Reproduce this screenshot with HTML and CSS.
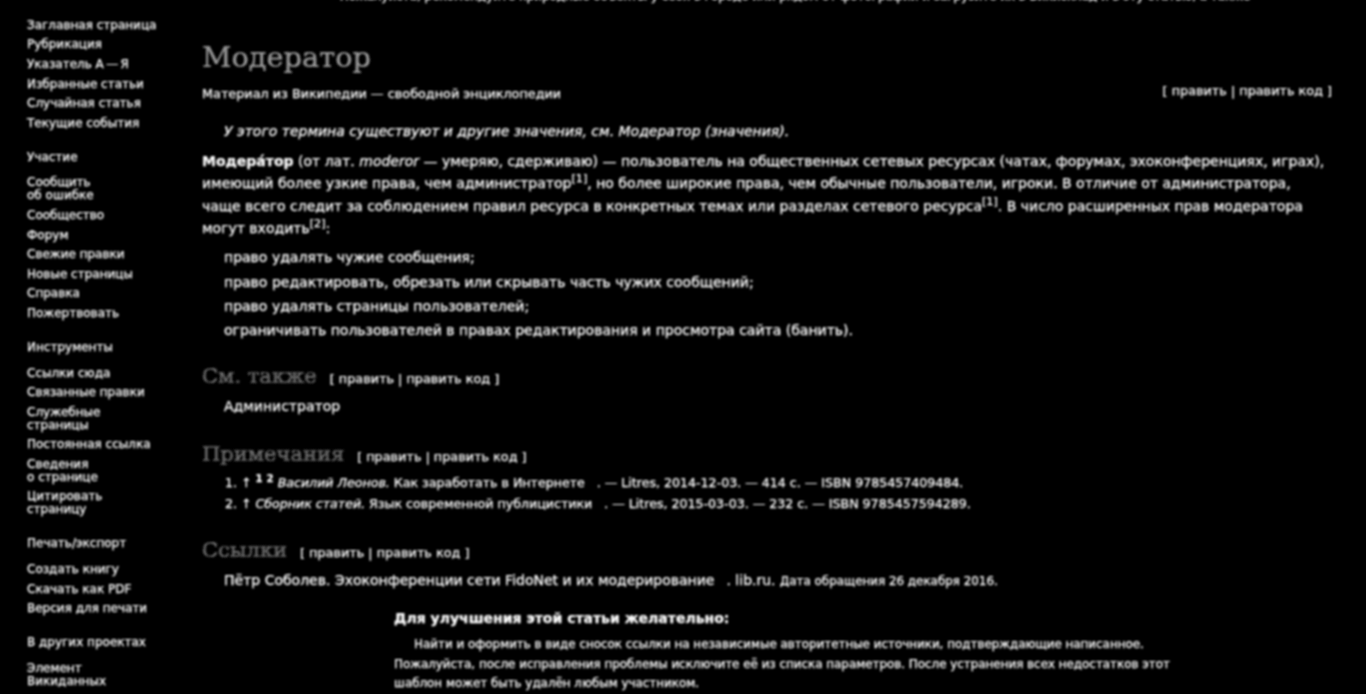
FILE: index.html
```html
<!DOCTYPE html>
<html lang="ru">
	<head>
		<meta charset="UTF-8">
		<title>Модератор — Википедия</title>
		<link rel="stylesheet" href="styles.css">
	</head>
	<body>
		<div class="page">
			<nav class="sidebar">
				<ul class="nav-list">
					<li>Заглавная страница</li>
					<li>Рубрикация</li>
					<li>Указатель А&thinsp;—&thinsp;Я</li>
					<li>Избранные статьи</li>
					<li>Случайная статья</li>
					<li>Текущие события</li>
				</ul>
				<h3 class="nav-title">Участие</h3>
				<ul class="nav-list">
					<li>Сообщить<br>об ошибке</li>
					<li>Сообщество</li>
					<li>Форум</li>
					<li>Свежие правки</li>
					<li>Новые страницы</li>
					<li>Справка</li>
					<li>Пожертвовать</li>
				</ul>
				<h3 class="nav-title">Инструменты</h3>
				<ul class="nav-list">
					<li>Ссылки сюда</li>
					<li>Связанные правки</li>
					<li>Служебные<br>страницы</li>
					<li>Постоянная ссылка</li>
					<li>Сведения<br>о странице</li>
					<li>Цитировать<br>страницу</li>
				</ul>
				<h3 class="nav-title">Печать/экспорт</h3>
				<ul class="nav-list">
					<li>Создать книгу</li>
					<li>Скачать как PDF</li>
					<li>Версия для печати</li>
				</ul>
				<h3 class="nav-title">В других проектах</h3>
				<ul class="nav-list">
					<li>Элемент<br>Викиданных</li>
				</ul>
			</nav>
			<main class="content">
				<p class="top-notice">Пожалуйста, рекомендуйте природные объекты у себя в городе или рядом от фотографии и загрузите их в Викисклад и в эту статью, а также</p>
				<h1 class="page-title">Модератор</h1>
				<div class="subtitle-row">
					<span>Материал из Википедии — свободной энциклопедии</span>
					<span class="edit-links top-edit">[ править | править код ]</span>
				</div>
				<p class="hatnote">У этого термина существуют и другие значения, см. Модератор (значения).</p>
				<p class="para"><b>Модера́тор</b> (от лат. <i>moderor</i> — умеряю, сдерживаю) — пользователь на общественных сетевых ресурсах (чатах, форумах, эхоконференциях, играх), имеющий более узкие права, чем администратор<sup>[1]</sup>, но более широкие права, чем обычные пользователи, игроки. В отличие от администратора, чаще всего следит за соблюдением правил ресурса в конкретных темах или разделах сетевого ресурса<sup>[1]</sup>. В число расширенных прав модератора могут входить<sup>[2]</sup>:</p>
				<ul class="plain-list">
					<li>право удалять чужие сообщения;</li>
					<li>право редактировать, обрезать или скрывать часть чужих сообщений;</li>
					<li>право удалять страницы пользователей;</li>
					<li>ограничивать пользователей в правах редактирования и просмотра сайта (банить).</li>
				</ul>
				<div class="section-head">
					<h2>См. также</h2>
					<span class="edit-links">[ править | править код ]</span>
				</div>
				<ul class="plain-list section-list">
					<li>Администратор</li>
				</ul>
				<div class="section-head">
					<h2>Примечания</h2>
					<span class="edit-links">[ править | править код ]</span>
				</div>
				<ol class="refs">
					<li>↑ <sup><b>1</b></sup> <sup><b>2</b></sup> <i>Василий Леонов.</i> Как заработать в Интернете<span class="ref-gap"></span>. — Litres, 2014-12-03. — 414 с. — ISBN 9785457409484.</li>
					<li>↑ <i>Сборник статей.</i> Язык современной публицистики<span class="ref-gap"></span>. — Litres, 2015-03-03. — 232 с. — ISBN 9785457594289.</li>
				</ol>
				<div class="section-head">
					<h2>Ссылки</h2>
					<span class="edit-links">[ править | править код ]</span>
				</div>
				<ul class="plain-list section-list">
					<li>Пётр Соболев. Эхоконференции сети FidoNet и их модерирование<span class="ref-gap"></span>. lib.ru. <small>Дата обращения 26 декабря 2016.</small></li>
				</ul>
				<div class="ambox">
					<p class="ambox-title">Для улучшения этой статьи желательно:</p>
					<p class="ambox-item">Найти и оформить в виде сносок ссылки на независимые авторитетные источники, подтверждающие написанное.</p>
					<p>Пожалуйста, после исправления проблемы исключите её из списка параметров. После устранения всех недостатков этот шаблон может быть удалён любым участником.</p>
				</div>
			</main>
		</div>
	</body>
</html>
```
FILE: styles.css
```css
html, body {
	margin: 0;
	height: 694px;
	overflow: hidden;
	background: #000;
}
body {
	color: #fff;
	font-family: "DejaVu Sans", sans-serif;
	font-size: 14px;
	-webkit-text-stroke: 0.25px #fff;
}
/* the whole shot is soft and heavy, as if scaled up */
.page {
	display: flex;
	filter: blur(0.8px) brightness(1.6) contrast(2.2);
}
ul, ol, p, h1, h2, h3 {
	margin: 0;
	padding: 0;
}
.sidebar {
	width: 160px;
	flex: none;
	padding: 15.5px 0 0 27px;
	font-size: 12px;
	line-height: 13px;
}
.nav-list {
	list-style: none;
}
.nav-list li {
	padding: 3.3px 0;
	width: 130px;
}
.nav-title {
	font-size: 12px;
	font-weight: normal;
	padding: 17.5px 0 9.5px;
}
.content {
	flex: 1;
	min-width: 0;
	padding-right: 34px;
	margin-left: 15px;
	line-height: 22.4px;
}
.top-notice {
	margin-top: -11px;
	padding-left: 56px;
	text-align: center;
	font-size: 11.9px;
	line-height: 15px;
	white-space: nowrap;
}
.page-title {
	font-family: "DejaVu Serif", serif;
	font-weight: normal;
	font-size: 28.8px;
	line-height: 36px;
	margin-top: 35px;
	color: #555;
	-webkit-text-stroke: 0.2px #777;
}
.subtitle-row {
	display: flex;
	justify-content: space-between;
	font-size: 12.8px;
	margin-top: 8px;
}
.edit-links {
	font-size: 12.8px;
}
.top-edit {
	margin-top: -3px;
}
.hatnote {
	font-style: italic;
	padding-left: 22px;
	margin-top: 15px;
}
.para {
	margin-top: 7px;
}
sup {
	font-size: 80%;
	line-height: 1;
}
.plain-list {
	list-style: none;
	padding-left: 22px;
	margin-top: 6px;
	line-height: 24.2px;
}
.section-list {
	margin-top: 3px;
	padding-bottom: 2px;
}
.section-head {
	display: flex;
	align-items: baseline;
	gap: 13px;
	margin-top: 19px;
}
.section-head h2 {
	font-family: "DejaVu Serif", serif;
	font-weight: normal;
	font-size: 21px;
	line-height: 30px;
	color: #444;
	-webkit-text-stroke: 0.2px #777;
}
.refs {
	padding-left: 39px;
	padding-bottom: 2px;
	font-size: 12.6px;
	line-height: 21px;
	margin-top: 3px;
}
.ref-gap {
	display: inline-block;
	width: 12px;
}
small {
	font-size: 85%;
}
.ambox {
	width: 790px;
	margin: 12px 0 0 192px;
	font-size: 11.9px;
	line-height: 19.5px;
}
.ambox-title {
	font-weight: bold;
	font-size: 14px;
	line-height: 20px;
	margin-bottom: 7.5px;
}
.ambox-item {
	text-indent: 20px;
}
```
